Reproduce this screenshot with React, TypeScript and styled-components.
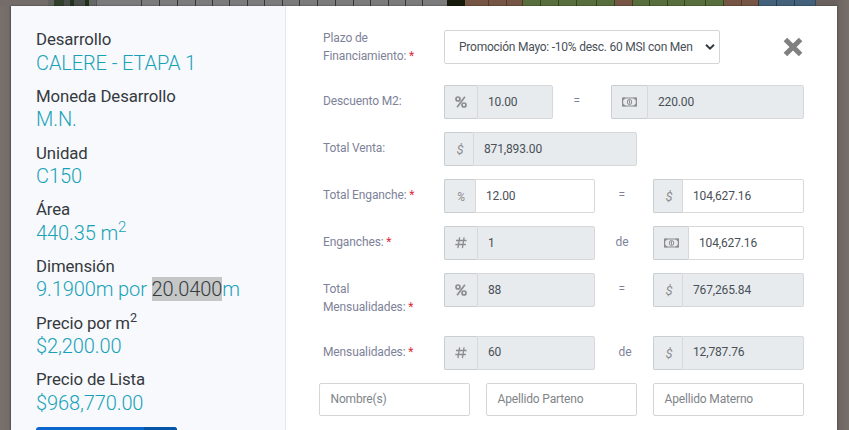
import React from "react";
import styled, { createGlobalStyle } from "styled-components";

const Global = createGlobalStyle`
  * { box-sizing: border-box; }
  html, body { margin: 0; padding: 0; }
  body {
    background: #766f6b;
    font-family: Roboto, "Liberation Sans", sans-serif;
    overflow: hidden;
  }
`;

const Page = styled.div`
  width: 849px;
  height: 430px;
  overflow: hidden;
  display: flex;
  flex-direction: column;
  background: linear-gradient(90deg, #77706c 0, #736c68 9px, #68615d 11px, #68615d 836px, #6c6561 838px, #776f6a 849px);
`;

const MapStrip = styled.div`
  display: flex;
  flex: none;
  height: 6px;
`;

const Lot = styled.div<{ $w: number; $c: string; $line?: string }>`
  flex: none;
  width: ${(p) => p.$w}px;
  height: 6px;
  background: ${(p) => p.$c};
  border-right: ${(p) => (p.$line ? `1px solid ${p.$line}` : "0")};
`;

const Modal = styled.div`
  display: flex;
  flex: none;
  width: 826px;
  height: 424px;
  margin-left: 11px;
  background: #fff;
  border-top-left-radius: 1px;
  overflow: hidden;
  box-shadow: 0 0 2px rgba(0, 0, 0, 0.5);
`;

const Sidebar = styled.aside`
  flex: none;
  width: 275px;
  padding: 22.1px 0 0 25px;
  background: #f8f9fc;
  border-right: 1px solid #e4e6ea;
`;

const Fact = styled.div`
  height: 56.71px;
`;

const FactName = styled.div`
  height: 21.5px;
  line-height: 22px;
  font-size: 16.8px;
  letter-spacing: -0.1px;
  color: #343a40;
  white-space: nowrap;
`;

const FactValue = styled.div`
  height: 26px;
  line-height: 26px;
  font-size: 20px;
  font-weight: 300;
  letter-spacing: -0.1px;
  color: #17a2b8;
  white-space: nowrap;
`;

const Sup = styled.sup`
  font-size: 75%;
  line-height: 0;
  position: relative;
  top: -0.5em;
  vertical-align: baseline;
`;

const Selected = styled.span`
  display: inline-block;
  height: 24px;
  line-height: 25px;
  background: #c5c6c6;
  color: #343a40;
`;

const SplitButton = styled.div`
  display: flex;
  width: 141px;
  height: 30px;
  margin-top: 2px;
  border-radius: 3px;
  overflow: hidden;
  background: #0a66cc;
`;

const SplitToggle = styled.div`
  width: 33px;
  margin-left: auto;
  background: #0655a6;
`;

const Form = styled.form`
  flex: 1;
  padding: 24px 0 0 33px;
`;

const Row = styled.div<{ $gap?: number }>`
  display: flex;
  height: 34px;
  margin-bottom: ${(p) => p.$gap ?? 13}px;
`;

const Label = styled.label<{ $raised?: boolean }>`
  flex: none;
  width: 125px;
  padding-left: 4px;
  margin-top: ${(p) => (p.$raised ? -1 : 7)}px;
  font-size: 12px;
  line-height: 18px;
  letter-spacing: -0.12px;
  color: #7e8299;
  white-space: nowrap;
`;

const Star = styled.span`
  color: #e02a3c;
`;

const Separator = styled.div<{ $w: number; $pad: number }>`
  flex: none;
  width: ${(p) => p.$w}px;
  padding: 7px 0 0 ${(p) => p.$pad}px;
  font-size: 12px;
  line-height: 18px;
  color: #7e8299;
`;

const Group = styled.div<{ $w: number }>`
  display: flex;
  flex: none;
  width: ${(p) => p.$w}px;
  height: 34px;
`;

const Prefix = styled.div<{ $w: number }>`
  display: flex;
  align-items: center;
  justify-content: center;
  flex: none;
  width: ${(p) => p.$w}px;
  border: 1px solid #c9ced2;
  border-right: 0;
  border-radius: 2px 0 0 2px;
  background: #e9ecef;
  color: #8b8d90;
`;

const Field = styled.div<{ $white?: boolean; $lh: number }>`
  flex: 1;
  padding-left: 10px;
  border: 1px solid #d6d8da;
  border-radius: 0 2px 2px 0;
  background: ${(p) => (p.$white ? "#fff" : "#e7ebee")};
  font-size: 12px;
  line-height: ${(p) => p.$lh}px;
  letter-spacing: -0.15px;
  color: #495057;
`;

const Select = styled.div`
  display: flex;
  align-items: center;
  width: 276px;
  height: 34px;
  padding: 0 4px 0 14px;
  border: 1px solid #d3d5d7;
  border-radius: 2px;
  font-size: 12px;
  letter-spacing: -0.24px;
  color: #495057;
  white-space: nowrap;

  svg { margin-left: auto; }
`;

const Close = styled.div`
  width: 20px;
  height: 20px;
  margin: 7px 0 0 62.5px;
  svg { display: block; }
`;

const Names = styled.div`
  display: flex;
  gap: 16px;
`;

const NameField = styled.div`
  width: 151px;
  height: 33px;
  padding-left: 10.5px;
  border: 1px solid #d3d5d7;
  border-radius: 2px;
  font-size: 12px;
  line-height: 30px;
  letter-spacing: -0.16px;
  color: #808488;
`;

const Italic = styled.i<{ $size: number }>`
  padding: 1px 0 0 2px;
  font-size: ${(p) => p.$size}px;
  color: #8b8d90;
`;

type IconKind = "percent" | "dollar" | "percentItalic" | "hash" | "money";

const prefixWidth: Record<IconKind, number> = {
  percent: 33,
  dollar: 29,
  percentItalic: 31,
  hash: 33,
  money: 36,
};

const Icon = ({ kind, w }: { kind: IconKind; w?: number }) => {
  let glyph: React.ReactNode;
  if (kind === "percent") {
    glyph = (
      <svg width="12" height="12" viewBox="0 0 12 12" fill="none" stroke="currentColor">
        <circle cx="3" cy="3" r="2" strokeWidth="1.7" />
        <circle cx="9" cy="9" r="2" strokeWidth="1.7" />
        <path d="M9.9.7 2.1 11.3" strokeWidth="1.7" />
      </svg>
    );
  } else if (kind === "hash") {
    glyph = (
      <svg width="12" height="12" viewBox="0 0 12 12" fill="none" stroke="currentColor" strokeWidth="1.3">
        <path d="M4.6.4 2.9 11.2M9.1.4 7.4 11.2M1 3.5h10.6M.3 7.5h10.6" />
      </svg>
    );
  } else if (kind === "money") {
    glyph = (
      <svg width="15" height="10" viewBox="0 0 15 10" fill="none" stroke="currentColor">
        <path d="M.6 1h13.8v8H.6z" strokeWidth="1.2" />
        <path d="M.6 1h2.8L.6 3.6zM14.4 1h-2.8l2.8 2.6zM.6 9h2.8L.6 6.4zM14.4 9h-2.8l2.8-2.6z" fill="currentColor" strokeWidth=".6" />
        <ellipse cx="7.5" cy="5" rx="2.2" ry="2.6" strokeWidth="1" />
        <path d="M7.5 3.4v3.2M6.8 4h.7" strokeWidth="1" />
      </svg>
    );
  } else if (kind === "dollar") {
    glyph = <Italic $size={13}>$</Italic>;
  } else {
    glyph = <Italic $size={12}>%</Italic>;
  }
  return <Prefix $w={w ?? prefixWidth[kind]}>{glyph}</Prefix>;
};

interface EntryProps {
  icon: IconKind;
  value: string;
  w?: number;
  white?: boolean;
  prefix?: number;
  lh?: number;
}

const Entry = ({ icon, value, w = 151, white, prefix, lh = 33 }: EntryProps) => (
  <Group $w={w}>
    <Icon kind={icon} w={prefix} />
    <Field $white={white} $lh={lh}>{value}</Field>
  </Group>
);

const Required = () => <Star>*</Star>;

const gray = "#7b7b7b";
const green = "#596e3d";
const brown = "#765545";
const blue = "#43617a";
const greenLine = "#33471f";
const brownLine = "#57382b";

const lots: [number, string, string?][] = [
  [48, "#736c68"],
  [6, "#62645f"],
  [10, "#31402b"],
  [6, "#4b4f4c"],
  [4, "#22331d"],
  [11, "#4a4e4a"],
  [4, "#20311a"],
  [8, "#666867", "#555"],
  [45, gray, "#3c3c3c"],
  ...[18, 18, 18, 17, 17, 18, 17, 18, 17, 18, 18, 18, 17, 18, 17, 17].map(
    (w): [number, string, string] => [w, gray, "#373737"]
  ),
  [24, gray],
  [18, "#171b0b"],
  [24, brown, brownLine],
  [18, brown, brownLine],
  [16, brown, "#463b21"],
  [18, green, greenLine],
  [18, green, greenLine],
  [18, green, greenLine],
  [20, green, greenLine],
  [18, green, greenLine],
  [18, brown, "#463b21"],
  [17, green, greenLine],
  [18, green, greenLine],
  [17, green, greenLine],
  [21, green, greenLine],
  [18, green, greenLine],
  [18, brown, brownLine],
  [17, brown, "#373737"],
  [18, blue, "#263e52"],
  [18, blue, "#263e52"],
  [21, blue, "#3a4853"],
];

const facts: [React.ReactNode, React.ReactNode][] = [
  ["Desarrollo", "CALERE - ETAPA 1"],
  ["Moneda Desarrollo", "M.N."],
  ["Unidad", "C150"],
  ["Área", <>440.35 m<Sup>2</Sup></>],
  ["Dimensión", <>9.1900m por <Selected>20.0400</Selected>m</>],
  [<>Precio por m<Sup>2</Sup></>, "$2,200.00"],
  ["Precio de Lista", "$968,770.00"],
];

export default function App() {
  return (
    <Page>
      <Global />
      <MapStrip>
        {lots.map(([w, c, line], i) => (
          <Lot key={i} $w={w} $c={c} $line={line} />
        ))}
      </MapStrip>
      <Modal>
        <Sidebar>
          {facts.map(([name, value], i) => (
            <Fact key={i}>
              <FactName>{name}</FactName>
              <FactValue>{value}</FactValue>
            </Fact>
          ))}
          <SplitButton>
            <SplitToggle />
          </SplitButton>
        </Sidebar>
        <Form>
          <Row $gap={21}>
            <Label $raised>Plazo de<br />Financiamiento: <Required /></Label>
            <Select>
              Promoción Mayo: -10% desc. 60 MSI con Men
              <svg width="10" height="8" viewBox="0 0 10 8" fill="none" stroke="#343a40" strokeWidth="2">
                <path d="M1 1.7 5 5.7 9 1.7" />
              </svg>
            </Select>
            <Close>
              <svg width="20" height="20" viewBox="0 0 20 20" stroke="#808080" strokeWidth="5">
                <path d="M2.4 2.4 17.6 17.6M17.6 2.4 2.4 17.6" />
              </svg>
            </Close>
          </Row>
          <Row>
            <Label>Descuento M2:</Label>
            <Entry icon="percent" value="10.00" w={109} />
            <Separator $w={58} $pad={20.5}>=</Separator>
            <Entry icon="money" value="220.00" w={193} />
          </Row>
          <Row>
            <Label>Total Venta:</Label>
            <Entry icon="dollar" value="871,893.00" w={193} />
          </Row>
          <Row>
            <Label>Total Enganche: <Required /></Label>
            <Entry icon="percentItalic" value="12.00" white />
            <Separator $w={58} $pad={23.5}>=</Separator>
            <Entry icon="dollar" value="104,627.16" white />
          </Row>
          <Row>
            <Label>Enganches: <Required /></Label>
            <Entry icon="hash" value="1" />
            <Separator $w={58} $pad={20.5}>de</Separator>
            <Entry icon="money" value="104,627.16" prefix={35} white />
          </Row>
          <Row $gap={29}>
            <Label>Total<br />Mensualidades: <Required /></Label>
            <Entry icon="percent" value="88" />
            <Separator $w={58} $pad={23.5}>=</Separator>
            <Entry icon="dollar" value="767,265.84" />
          </Row>
          <Row>
            <Label>Mensualidades: <Required /></Label>
            <Entry icon="hash" value="60" lh={31} />
            <Separator $w={58} $pad={23.5}>de</Separator>
            <Entry icon="dollar" value="12,787.76" lh={31} />
          </Row>
          <Names>
            <NameField>Nombre(s)</NameField>
            <NameField>Apellido Parteno</NameField>
            <NameField>Apellido Materno</NameField>
          </Names>
        </Form>
      </Modal>
    </Page>
  );
}
